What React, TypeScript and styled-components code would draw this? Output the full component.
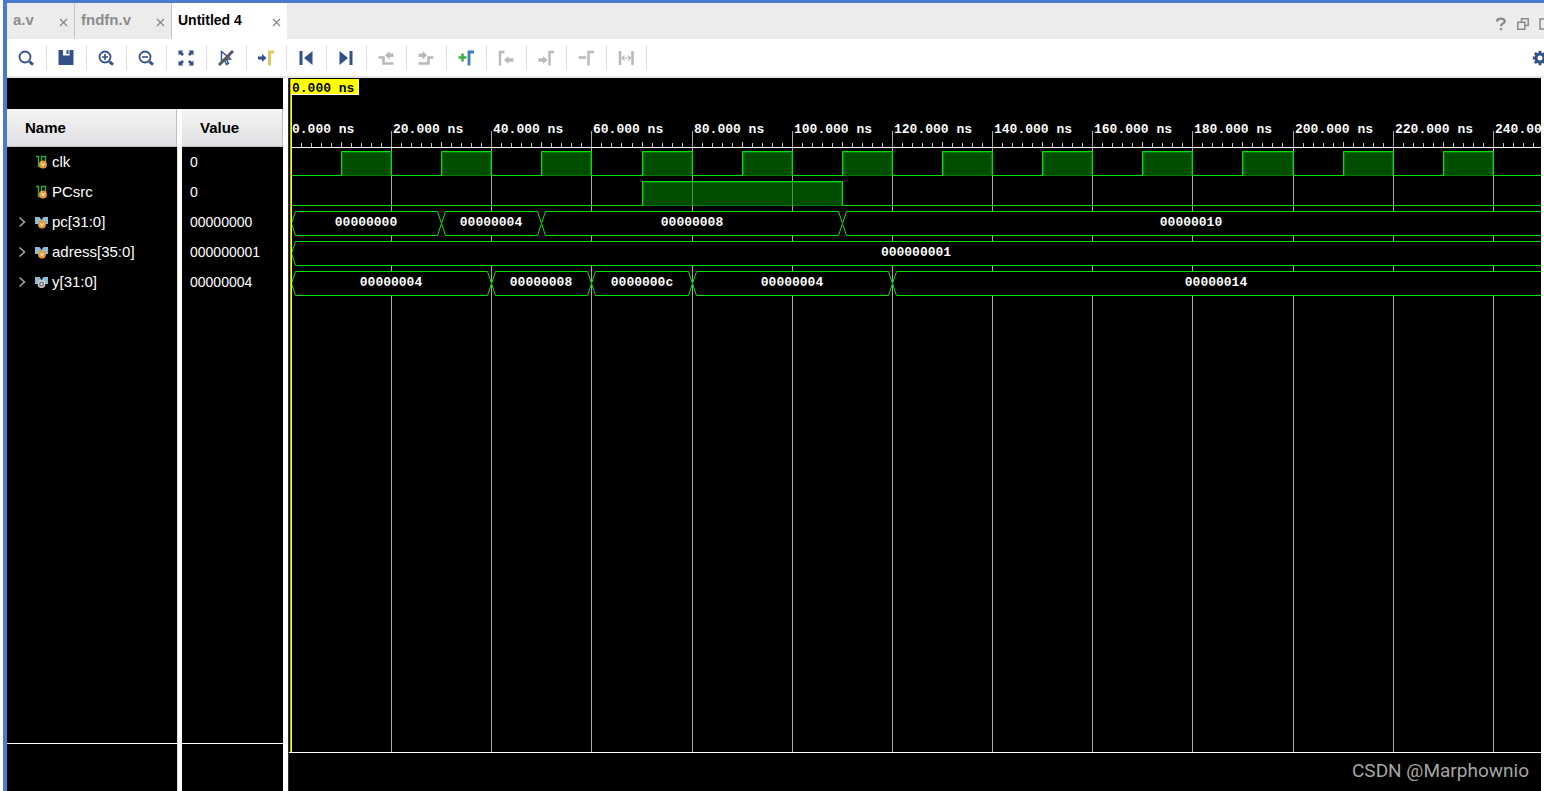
import React, { useEffect, useRef, useState } from "react";
import styled, { createGlobalStyle } from "styled-components";

const NAVY = "#34508a";
const MUTED = "#b9b9b9";
const GREEN = "#00e400";

const GlobalStyle = createGlobalStyle`
  * { box-sizing: border-box; }
  body { margin: 0; background: #fff; font-family: "Liberation Sans", Arial, sans-serif; }
  button { font: inherit; color: inherit; background: none; border: 0; padding: 0; cursor: pointer; }
`;

const Window = styled.main`
  display: flex;
  flex-direction: column;
  min-height: 100vh;
  margin-left: 3px;
  border-top: 3px solid #4a7bcb;
  border-left: 4px solid #4a7bcb;
  overflow: hidden;
`;

const TabBar = styled.header`
  display: flex;
  height: 36px;
  background: #ececec;
`;

const Tab = styled.div<{ $width: number; $active?: boolean }>`
  display: flex;
  justify-content: space-between;
  width: ${(p) => p.$width}px;
  padding: 8px 6px 0 6px;
  border-right: ${(p) => (p.$active ? "0" : "1px solid #c4c4c4")};
  background: ${(p) => (p.$active ? "#fff" : "transparent")};
  color: ${(p) => (p.$active ? "#000" : "#8c8c8c")};
  font-size: ${(p) => (p.$active ? 14 : 15)}px;
  font-weight: bold;
  line-height: 18px;
`;

const CloseButton = styled.button`
  display: flex;
  height: 9px;
  margin-top: 7px;
`;

const WindowActions = styled.div`
  display: flex;
  align-items: center;
  gap: 8px;
  margin-left: auto;
  margin-right: -8px;
  padding-top: 5px;
  color: #8a8a8a;

  button { display: flex; }
`;

const Toolbar = styled.nav`
  display: flex;
  align-items: center;
  height: 39px;
  border-bottom: 2px solid #e6e6e6;
`;

const Tool = styled.button<{ $muted?: boolean }>`
  display: flex;
  align-items: center;
  justify-content: center;
  width: 40px;
  height: 25px;
  padding-right: 1px;
  border-right: 1px solid #dedede;
  color: ${(p) => (p.$muted ? MUTED : NAVY)};
`;

const SettingsButton = styled.button`
  display: flex;
  margin-left: auto;
  margin-right: -4px;
  color: ${NAVY};
`;

const Workspace = styled.section`
  display: flex;
  flex: 1;
`;

const SignalPane = styled.aside`
  display: flex;
  flex-direction: column;
  flex: none;
  width: 281px;
  border-right: 5px solid #fff;
  background: #000;
`;

const columnStripes = `linear-gradient(to right, #000 170px, #dcdcdc 170px 171px, #fff 171px 175px, #000 175px)`;

const SignalList = styled.div`
  flex: 1;
  margin-top: 31px;
  background: ${columnStripes};
`;

const SignalFooter = styled.div`
  height: 48px;
  border-top: 1px solid #fff;
  background: ${columnStripes};
`;

const SignalTable = styled.table`
  width: 100%;
  table-layout: fixed;
  border-collapse: separate;
  border-spacing: 0;
  color: #fff;
`;

const NameHead = styled.th`
  width: 175px;
  height: 38px;
  padding: 0 0 0 18px;
  border-right: 5px solid #fff;
  background: linear-gradient(#f4f4f4, #dfdfe2) padding-box;
  box-shadow: inset -1px -1px 0 #bdbdbd;
  color: #000;
  font-size: 15px;
  line-height: 18px;
  text-align: left;
`;

const ValueHead = styled(NameHead)`
  width: auto;
  border-right: 0;
`;

const NameCell = styled.td`
  height: 30px;
  padding: 0 0 0 9px;
  font-size: 15px;
  line-height: 18px;
`;

const NameLine = styled.div`
  display: flex;
  align-items: center;
`;

const ExpandSlot = styled.div`
  display: flex;
  width: 19px;

  button { display: flex; }
`;

const SignalName = styled.span`
  padding-left: 3px;
`;

const ValueCell = styled.td`
  padding: 0 0 0 8px;
  font-size: 14px;
  line-height: 18px;
`;

const WavePane = styled.section`
  display: flex;
  flex-direction: column;
  flex: 1;
  min-width: 0;
  margin-right: 3px;
  border-left: 1px solid #333;
  background: #000;
`;

const WaveView = styled.div`
  display: flex;
  flex: 1;
  min-height: 240px;
  overflow: hidden;
`;

const WaveSvg = styled.svg`
  display: block;
  flex: 1;
  width: 0;
  height: auto;
  font-family: "Liberation Mono", monospace;
  font-size: 13px;
  font-weight: bold;
`;

const BusText = styled.text`
  fill: #fff;
  text-anchor: middle;
`;

const WaveFooter = styled.footer`
  display: flex;
  justify-content: flex-end;
  height: 39px;
  padding: 7px 12px 0 0;
  border-top: 1px solid #fff;
  color: #a6a6a6;
  font-family: Roboto, "Liberation Sans", sans-serif;
  font-size: 19px;
  line-height: 22px;
`;

const Icon = ({ children, size = 16 }: { children: React.ReactNode; size?: number }) => (
  <svg width={size} height={size} viewBox={`0 0 ${size} ${size}`} fill="none" stroke="currentColor" aria-hidden="true">
    {children}
  </svg>
);

const lens = (
  <>
    <circle cx="7" cy="7" r="5.5" strokeWidth="1.8" />
    <path d="M11.500 11.600l3.500 3.200" strokeWidth="2.800" />
  </>
);

const SearchIcon = () => <Icon>{lens}</Icon>;
const SaveIcon = () => (
  <Icon><path d="M.5 0H5v5.500h6.500V0H15.500V15H.5zM8.500 0h2v4h-2z" fill="currentColor" stroke="none" /></Icon>
);
const ZoomInIcon = () => <Icon>{lens}<path d="M4 7h6M7 4v6" strokeWidth="1.600" /></Icon>;
const ZoomOutIcon = () => <Icon>{lens}<path d="M4 7h6" strokeWidth="1.600" /></Icon>;
const FitIcon = () => (
  <Icon>
    <path d="M.5.500h5L4 2l2 2-2 2-2-2L.5 5.500zM15.500.500v5L14 4l-2 2-2-2 2-2L10.500.500zM.5 15.500v-5L2 12l2-2 2 2-2 2 1.500 1.500zM15.500 15.500h-5L12 14l-2-2 2-2 2 2 1.500-1.500z" fill="currentColor" stroke="none" />
  </Icon>
);
const CursorOffIcon = () => (
  <Icon>
    <path d="M3.500 1.500v11l3-2.500 2 4.500 2-1-2-4 4-.5z" strokeWidth="1.400" />
    <path d="M1 15L15 1" stroke="#585858" strokeWidth="3" />
  </Icon>
);
const GoToCursorIcon = () => (
  <Icon>
    <path d="M0 6.500h4V4l4.500 4L4 12V9.500H0z" fill="currentColor" stroke="none" />
    <path d="M11.500 15.500V2h4.500" stroke="#dfc766" strokeWidth="3" />
  </Icon>
);
const FirstIcon = () => (
  <Icon><path d="M1.500 1h3v14h-3zM14.500 1v14L6 8z" fill="currentColor" stroke="none" /></Icon>
);
const LastIcon = () => (
  <Icon><path d="M11.500 1h3v14h-3zM1.500 1v14L10 8z" fill="currentColor" stroke="none" /></Icon>
);
const PrevEdgeIcon = () => (
  <Icon>
    <path d="M.5 7.500h5V13.500H15.500" strokeWidth="2.600" />
    <path d="M15.500 3.500V7H11.500V9.500L7 5.300l4.500-4.300v2.500z" fill="currentColor" stroke="none" />
  </Icon>
);
const NextEdgeIcon = () => (
  <Icon>
    <path d="M.5 13.500h10V7.500h5" strokeWidth="2.600" />
    <path d="M.5 3.500V7H4.500V9.500L9 5.300 4.500 1v2.500z" fill="currentColor" stroke="none" />
  </Icon>
);
const AddMarkerIcon = () => (
  <Icon>
    <path d="M.5 7.500h8M4.500 3.500v8" stroke="#3fae49" strokeWidth="2.600" />
    <path d="M11 15.500V2h5" stroke="#3a80b4" strokeWidth="2.800" />
  </Icon>
);
const PrevMarkerIcon = () => (
  <Icon>
    <path d="M2 15.500V2h4.500" strokeWidth="2.400" />
    <path d="M15.500 8.300v3.400H10.500V14L6 10l4.500-4v2.300z" fill="currentColor" stroke="none" />
  </Icon>
);
const NextMarkerIcon = () => (
  <Icon>
    <path d="M11.500 15.500V2H16" strokeWidth="2.400" />
    <path d="M.5 8.300v3.400H5V14l4.500-4L5 6v2.300z" fill="currentColor" stroke="none" />
  </Icon>
);
const RemoveMarkerIcon = () => (
  <Icon><path d="M.5 7.500h7.500M10.500 15.500V2h5.500" strokeWidth="2.400" /></Icon>
);
const SpanIcon = () => (
  <Icon>
    <path d="M2 1v14M14.500 1v14" strokeWidth="2.600" />
    <path d="M4 8h8.500M6.500 5.500L4 8l2.500 2.500M10 5.500L12.500 8 10 10.500" strokeWidth="1.200" />
  </Icon>
);
const GearIcon = () => (
  <Icon>
    <circle cx="8" cy="8" r="4" strokeWidth="3" />
    <path d="M8 .8V3M8 13v2.200M.8 8H3M13 8h2.200M2.900 2.900l1.600 1.600M11.500 11.500l1.600 1.600M2.900 13.100l1.600-1.600M11.500 4.500l1.600-1.600" strokeWidth="2.800" />
  </Icon>
);
const CloseIcon = () => (
  <Icon size={9}><path d="M1 1l7 7M8 1L1 8" stroke="#8a8a8a" strokeWidth="1.400" /></Icon>
);
const HelpIcon = () => (
  <Icon size={14}>
    <path d="M3 4.500C3 .8 10.800.8 10.800 4.200 10.800 6.700 7 6.300 7 9.200M7 11v2.200" strokeWidth="2.300" />
  </Icon>
);
const RestoreIcon = () => (
  <Icon size={14}>
    <path d="M5.500 4.500V1.800h6.700v6.700H9M1.800 5.200h7v7h-7z" strokeWidth="1.500" />
  </Icon>
);
const MaximizeIcon = () => (
  <Icon size={14}><path d="M2 2h9v10H2z" strokeWidth="1.600" /></Icon>
);
const ChevronIcon = () => (
  <Icon size={12}><path d="M3.500 1.500L8.500 6l-5 4.500" stroke="#a8a8a8" strokeWidth="1.500" /></Icon>
);

const Badge = ({ kind }: { kind: string }) =>
  kind === "wire" ? (
    <>
      <circle cx="6.500" cy="9" r="3.200" fill="#777" stroke="#d2d2d2" strokeWidth="1.400" />
      <circle cx="6.500" cy="9" r="1" fill="#eee" stroke="none" />
    </>
  ) : (
    <>
      <circle cx="8" cy="9.500" r="3.900" fill="#e99a35" stroke="none" />
      <path d="M6.500 8l1.500 3 1.500-3" stroke="#fff3df" strokeWidth="1" />
    </>
  );

const ScalarIcon = () => (
  <Icon size={14}>
    <path d="M1 1.500h2.500v10h3v-10h4v7" stroke="#35a84c" strokeWidth="1.400" />
    <Badge kind="reg" />
  </Icon>
);
const BusIcon = ({ kind }: { kind: string }) => (
  <Icon size={14}>
    <path d="M0 2h4.500L6.500 5l2-3H13v7H0z" fill="#8fbad0" stroke="none" />
    <g transform={kind === "wire" ? undefined : "translate(-1 0)"}><Badge kind={kind} /></g>
  </Icon>
);

type Segment = { from: number; to?: number; text: string };
type Signal = {
  name: string;
  value: string;
  kind: "reg" | "wire";
  pulses?: [number, number][];
  segments?: Segment[];
};

const clockPulses = Array.from({ length: 12 }, (_, i): [number, number] => [10 + i * 20, 20 + i * 20]);

const signals: Signal[] = [
  { name: "clk", value: "0", kind: "reg", pulses: clockPulses },
  { name: "PCsrc", value: "0", kind: "reg", pulses: [[70, 110]] },
  {
    name: "pc[31:0]", value: "00000000", kind: "reg",
    segments: [
      { from: 0, to: 30, text: "00000000" },
      { from: 30, to: 50, text: "00000004" },
      { from: 50, to: 110, text: "00000008" },
      { from: 110, text: "00000010" },
    ],
  },
  { name: "adress[35:0]", value: "000000001", kind: "reg", segments: [{ from: 0, text: "000000001" }] },
  {
    name: "y[31:0]", value: "00000004", kind: "wire",
    segments: [
      { from: 0, to: 40, text: "00000004" },
      { from: 40, to: 60, text: "00000008" },
      { from: 60, to: 80, text: "0000000c" },
      { from: 80, to: 120, text: "00000004" },
      { from: 120, text: "00000014" },
    ],
  },
];

const PX_PER_NS = 5.0075;
const ORIGIN = 2;
const RULER_Y = 69;
const timeX = (ns: number) => Math.round(ORIGIN + ns * PX_PER_NS);

const Pulse = ({ from, to, y }: { from: number; to: number; y: number }) => {
  const x1 = timeX(from);
  const x2 = timeX(to);
  const gridTimes = Array.from({ length: Math.ceil(to / 20) }, (_, i) => i * 20).filter((t) => t > from && t < to);
  return (
    <g>
      <rect x={x1} y={y} width={x2 - x1} height={25} fill="#004d00" />
      <path d={`M${x1 + 1.5} ${y + 25}V${y + 1.5}H${x2 - 0.5}V${y + 24.5}H${x1}`} fill="none" stroke="#007a00" />
      {gridTimes.map((t) => (
        <rect key={t} x={timeX(t)} y={y + 1} width={1} height={24} fill="#4c944c" />
      ))}
      <path d={`M${x1 + 0.5} ${y + 25}V${y + 0.5}H${x2 + 0.5}V${y + 25}`} fill="none" stroke={GREEN} />
    </g>
  );
};

const Bus = ({ segment, y, width }: { segment: Segment; y: number; width: number }) => {
  const x1 = timeX(segment.from) + 0.5;
  const open = segment.to === undefined;
  const x2 = open ? width : timeX(segment.to as number) + 0.5;
  const top = y + 0.5;
  const mid = y + 12.5;
  const bottom = y + 24.5;
  const d = open
    ? `M${x2} ${top}H${x1 + 4}L${x1} ${mid}L${x1 + 4} ${bottom}H${x2}`
    : `M${x1} ${mid}L${x1 + 4} ${top}H${x2 - 4}L${x2} ${mid}L${x2 - 4} ${bottom}H${x1 + 4}Z`;
  return (
    <g>
      <path d={d} fill="#000" stroke={GREEN} />
      <BusText x={Math.floor((x1 + x2) / 2)} y={y + 15}>{segment.text}</BusText>
    </g>
  );
};

const Waveform = () => {
  const holder = useRef<HTMLDivElement>(null);
  const [width, setWidth] = useState(1252);

  useEffect(() => {
    const node = holder.current;
    if (!node) return;
    const measure = () => setWidth(node.clientWidth);
    measure();
    const observer = new ResizeObserver(measure);
    observer.observe(node);
    return () => observer.disconnect();
  }, []);

  const endNs = Math.floor((width - ORIGIN) / PX_PER_NS);
  const majors = Array.from({ length: Math.floor(endNs / 20) + 1 }, (_, i) => i * 20);
  const minors = Array.from({ length: Math.floor(endNs / 2) + 1 }, (_, i) => i * 2).filter((t) => t % 20 !== 0);

  return (
    <WaveView ref={holder}>
      <WaveSvg role="img" aria-label="Simulation waveform">
        {majors.slice(1).map((t) => (
          <line key={t} x1={timeX(t) + 0.5} x2={timeX(t) + 0.5} y1={53} y2="100%" stroke="#a8a8a8" />
        ))}
        {minors.map((t) => (
          <rect key={t} x={timeX(t)} y={t % 10 === 0 ? 64 : 65} width={1} height={t % 10 === 0 ? 5 : 4} fill="#c8c8c8" />
        ))}
        <rect x={ORIGIN} y={RULER_Y} width={width} height={1} fill="#fff" />
        {majors.map((t) => (
          <text key={t} x={timeX(t) + (t ? 2 : 1)} y={55} fill="#fff">{t}.000 ns</text>
        ))}
        {signals.map((signal, row) => {
          const y = 73 + row * 30;
          return (
            <g key={signal.name}>
              {signal.pulses && <rect x={ORIGIN} y={y + 24} width={width} height={1} fill={GREEN} />}
              {signal.pulses?.map(([from, to]) => <Pulse key={from} from={from} to={to} y={y} />)}
              {signal.segments?.map((s) => <Bus key={s.from} segment={s} y={y} width={width} />)}
            </g>
          );
        })}
        <rect x={1} y={1} width={1} height="100%" fill="#b5b500" />
        <rect x={2} y={1} width={1} height="100%" fill="#ffff00" />
        <rect x={2} y={1} width={68} height={16} fill="#fff" />
        <rect x={2} y={1} width={67} height={15} fill="#ffff00" />
        <text x={3} y={14} fill="#000">0.000 ns</text>
      </WaveSvg>
    </WaveView>
  );
};

const tabs = [
  { title: "a.v", width: 68 },
  { title: "fndfn.v", width: 97 },
  { title: "Untitled 4", width: 115, active: true },
];

const tools = [
  { label: "Search", icon: <SearchIcon /> },
  { label: "Save", icon: <SaveIcon /> },
  { label: "Zoom in", icon: <ZoomInIcon /> },
  { label: "Zoom out", icon: <ZoomOutIcon /> },
  { label: "Zoom fit", icon: <FitIcon /> },
  { label: "Toggle pointer", icon: <CursorOffIcon /> },
  { label: "Go to cursor", icon: <GoToCursorIcon /> },
  { label: "Go to start", icon: <FirstIcon /> },
  { label: "Go to end", icon: <LastIcon /> },
  { label: "Previous transition", icon: <PrevEdgeIcon />, muted: true },
  { label: "Next transition", icon: <NextEdgeIcon />, muted: true },
  { label: "Add marker", icon: <AddMarkerIcon /> },
  { label: "Previous marker", icon: <PrevMarkerIcon />, muted: true },
  { label: "Next marker", icon: <NextMarkerIcon />, muted: true },
  { label: "Remove marker", icon: <RemoveMarkerIcon />, muted: true },
  { label: "Swap cursors", icon: <SpanIcon />, muted: true },
];

export default function App() {
  return (
    <>
      <GlobalStyle />
      <Window>
        <TabBar>
          {tabs.map((tab) => (
            <Tab key={tab.title} $width={tab.width} $active={tab.active}>
              <span>{tab.title}</span>
              <CloseButton aria-label={`Close ${tab.title}`}><CloseIcon /></CloseButton>
            </Tab>
          ))}
          <WindowActions>
            <button aria-label="Help"><HelpIcon /></button>
            <button aria-label="Restore"><RestoreIcon /></button>
            <button aria-label="Maximize"><MaximizeIcon /></button>
          </WindowActions>
        </TabBar>
        <Toolbar>
          {tools.map((tool) => (
            <Tool key={tool.label} aria-label={tool.label} $muted={tool.muted}>{tool.icon}</Tool>
          ))}
          <SettingsButton aria-label="Settings"><GearIcon /></SettingsButton>
        </Toolbar>
        <Workspace>
          <SignalPane>
            <SignalList>
              <SignalTable>
                <thead>
                  <tr><NameHead>Name</NameHead><ValueHead>Value</ValueHead></tr>
                </thead>
                <tbody>
                  {signals.map((signal) => (
                    <tr key={signal.name}>
                      <NameCell>
                        <NameLine>
                          <ExpandSlot>
                            {signal.segments && (
                              <button aria-label={`Expand ${signal.name}`}><ChevronIcon /></button>
                            )}
                          </ExpandSlot>
                          {signal.segments ? <BusIcon kind={signal.kind} /> : <ScalarIcon />}
                          <SignalName>{signal.name}</SignalName>
                        </NameLine>
                      </NameCell>
                      <ValueCell>{signal.value}</ValueCell>
                    </tr>
                  ))}
                </tbody>
              </SignalTable>
            </SignalList>
            <SignalFooter />
          </SignalPane>
          <WavePane>
            <Waveform />
            <WaveFooter>CSDN @Marphownio</WaveFooter>
          </WavePane>
        </Workspace>
      </Window>
    </>
  );
}
